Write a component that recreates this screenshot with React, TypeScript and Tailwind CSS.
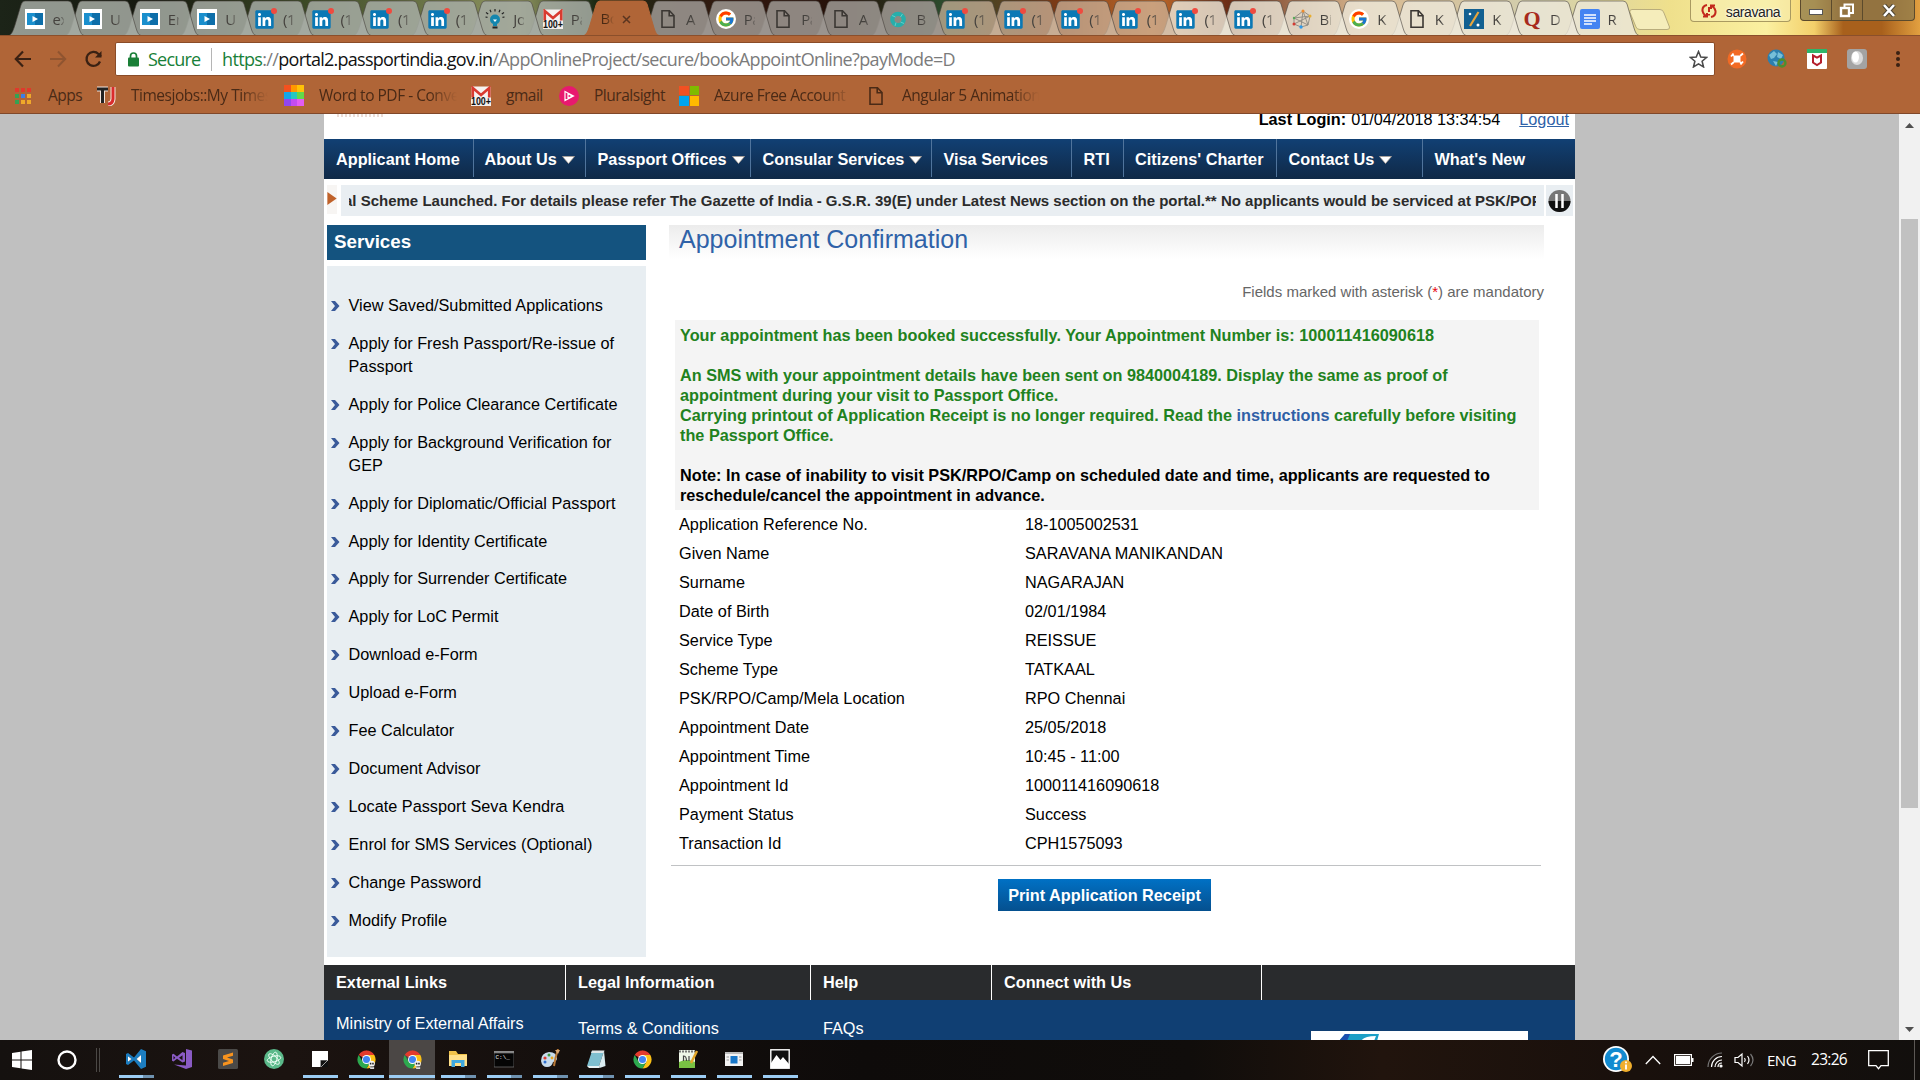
import React from "react";
import { FcGoogle } from "react-icons/fc";
import { FaLinkedin } from "react-icons/fa";

type Kind = "play" | "in" | "bulb" | "gmail" | "active" | "doc" | "google" | "ring" | "net" | "slash" | "quora" | "gdoc";

const tabs: { k: Kind; t: string }[] = [
  { k: "play", t: "ex" }, { k: "play", t: "U" }, { k: "play", t: "En" }, { k: "play", t: "U" },
  { k: "in", t: "(1" }, { k: "in", t: "(1" }, { k: "in", t: "(1" }, { k: "in", t: "(1" },
  { k: "bulb", t: "Jo" }, { k: "gmail", t: "Pa" }, { k: "active", t: "Bo" },
  { k: "doc", t: "A" }, { k: "google", t: "Pa" }, { k: "doc", t: "Pa" }, { k: "doc", t: "A" }, { k: "ring", t: "B" },
  { k: "in", t: "(1" }, { k: "in", t: "(1" }, { k: "in", t: "(1" }, { k: "in", t: "(1" }, { k: "in", t: "(1" }, { k: "in", t: "(1" },
  { k: "net", t: "Bi" }, { k: "google", t: "K" }, { k: "doc", t: "K" }, { k: "slash", t: "K" }, { k: "quora", t: "D" }, { k: "gdoc", t: "R" },
];

function Doc({ c = "#3b3733" }: { c?: string }) {
  return (
    <svg width="20" height="20" viewBox="0 0 20 20" fill="none" stroke={c} strokeWidth="1.6">
      <path d="M4 1.8h7.5L16 6.500v11.7H4z M11.2 2v4.8H16" />
    </svg>
  );
}

function Gmail() {
  return (
    <svg width="20" height="20" viewBox="0 0 20 20">
      <rect x="0.5" y="0.5" width="19" height="13" rx="1" fill="#f6f2f0" />
      <path d="M1.8 13.5V2l8.2 7 8.2-7v11.5" fill="none" stroke="#d93a30" strokeWidth="2.6" />
      <rect x="0" y="11.5" width="20" height="8.500" fill="#f4eeea" />
      <text x="0" y="19.2" fontSize="10" fontFamily="Liberation Sans" fontWeight="700" textLength="20" lengthAdjust="spacingAndGlyphs" fill="#111">100+</text>
    </svg>
  );
}

function Fav({ k }: { k: Kind }) {
  switch (k) {
    case "play":
      return (
        <svg width="20" height="20" viewBox="0 0 20 20">
          <rect width="20" height="20" fill="#fff" />
          <rect x="2" y="4" width="16" height="12" fill="#1a8fcd" />
          <path d="M10 4h8v12h-8z" fill="#0d6ea9" />
          <path d="M7.500 7v6l5.500-3z" fill="#fff" />
        </svg>
      );
    case "in":
      return (
        <span className="relative block h-5 w-5">
          <span className="absolute inset-[3px] bg-white" />
          <FaLinkedin className="absolute -left-px top-0 h-[21px] w-[21px] text-[#0a78b5]" />
          <span className="absolute -right-[2px] -top-px h-[6px] w-[6px] rounded-full bg-[#ef4a3f]" />
        </span>
      );
    case "bulb":
      return (
        <svg width="20" height="20" viewBox="0 0 20 20">
          <path d="M10 0v2.500M5 .8l1 2.400M15 .8l-1 2.400M1 3.500l2.200 1.500M19 3.500l-2.200 1.500M.5 8l2 .3M19.500 8l-2 .3" stroke="#222" strokeWidth="1.200" />
          <circle cx="10" cy="10.500" r="5" fill="#1386ae" />
          <path d="M8 14h4v3H8z" fill="#1386ae" />
          <path d="M8 10.500l2 2.500 2-2.500z" fill="#fff" />
          <rect x="7.500" y="17.500" width="5" height="2" fill="#222" />
        </svg>
      );
    case "gmail":
      return <Gmail />;
    case "google":
      return (
        <span className="grid h-5 w-5 place-items-center rounded-full bg-white"><FcGoogle className="h-[18px] w-[18px]" /></span>
      );
    case "ring":
      return (
        <svg width="20" height="20" viewBox="0 0 20 20">
          <circle cx="10" cy="10.500" r="5.700" fill="none" stroke="#27aeab" strokeWidth="4.200" />
          <path d="M4 6.500l3.500 1.500M14.500 5l-2 3M16 14.500l-3.500-1.500M7 17l1-3.500" stroke="#62cfca" strokeWidth="1" />
        </svg>
      );
    case "net":
      return (
        <svg width="20" height="20" viewBox="0 0 20 20" fill="none">
          <path d="M2 9l9-7 7 5-2 9-7 2-7-3zM2 9l14 7M11 2L9 18M18 7L2 15M2 9l16-2M11 2l5 14" stroke="#8b8880" strokeWidth="0.900" />
          <circle cx="11" cy="2" r="1.500" fill="#f08c2c" /><circle cx="2" cy="15" r="1.500" fill="#d53a32" />
          <circle cx="9" cy="18" r="1.700" fill="#2f9bea" /><circle cx="18" cy="7" r="1.500" fill="#e8af30" />
          <circle cx="2" cy="9" r="1.200" fill="#57a957" />
        </svg>
      );
    case "slash":
      return (
        <svg width="20" height="20" viewBox="0 0 20 20">
          <rect width="20" height="20" fill="#126091" />
          <path d="M14.500 3L6 17" stroke="#e7a63c" strokeWidth="2.200" />
          <circle cx="6" cy="5" r="1.300" fill="#fff" /><circle cx="14" cy="16" r="1.500" fill="#fff" />
        </svg>
      );
    case "quora":
      return <span className="block w-5 text-center font-['Liberation_Serif',serif] text-[22px] leading-5 font-bold text-[#a72a1c]">Q</span>;
    case "gdoc":
      return (
        <svg width="20" height="20" viewBox="0 0 20 20">
          <rect width="20" height="20" rx="2" fill="#4384f2" />
          <path d="M4 6h12M4 9h12M4 12h12M4 15h8" stroke="#fff" strokeWidth="1.500" />
        </svg>
      );
    default:
      return <Doc />;
  }
}

const tabFill = (i: number) =>
  i < 10 ? "rgba(165,171,163,0.86)" : i < 16 ? "rgba(156,150,145,0.88)" : i < 20 ? "rgba(205,182,158,0.72)" : "rgba(235,230,216,0.82)";

function Tab({ k, t, i }: { k: Kind; t: string; i: number }) {
  const active = k === "active";
  return (
    <div className="relative -mr-[17px] h-[35px] w-[74.600px] shrink-0" style={{ zIndex: active ? 60 : 40 - i }}>
      <svg className="absolute inset-0" width="76" height="36" viewBox="0 0 76 36">
        <path
          d="M0 35.500C3 34 4 31 6 25L12 5Q13 1 16 1H59Q62 1 63 4L70 28Q72 35 75 35.500Z"
          fill={active ? "#b06537" : tabFill(i)}
          stroke={active ? "#b06537" : "rgba(70,65,60,0.600)"}
          strokeWidth="1"
        />
      </svg>
      {active ? (
        <div className="relative flex h-full items-center pl-[16px] pt-[2px] text-[15px] text-[#4a2a14]">
          <span className="w-[14px] overflow-hidden tracking-tight [mask-image:linear-gradient(90deg,#000_40%,transparent)]">Bo</span>
          <svg className="ml-[8px] mt-[2px]" width="9" height="9" viewBox="0 0 9 9"><path d="M1 1l7 7M8 1L1 8" stroke="#5a3520" strokeWidth="1.500" /></svg>
        </div>
      ) : (
        <div className="relative flex h-full items-center pl-[16px] pt-[3px]">
          <Fav k={k} />
          <span className="ml-[8px] w-[11px] overflow-hidden text-[15px] leading-[20px] tracking-tight whitespace-nowrap text-[#45423e] [mask-image:linear-gradient(90deg,#000_50%,rgba(0,0,0,0.300))]">{t}</span>
        </div>
      )}
    </div>
  );
}

function TabStrip() {
  return (
    <div className="relative flex h-[35px] shrink-0 overflow-hidden bg-[linear-gradient(90deg,#1c2418_0%,#16190f_8%,#3c4a26_16%,#8f9560_27%,#1d2a14_31%,#33180f_38%,#241008_44%,#2c4a2c_49%,#7b3a16_55%,#c06a2a_60%,#6b2d16_64%,#d8b890_71%,#d2cfae_80%,#efe08c_87%,#fbf0a0_92%,#f3cf6a_94.500%,#a8601c_96%,#a8601c_98%,#e2a040_100%)] pl-[8.500px]">
      {tabs.map((x, i) => <Tab key={i} k={x.k} t={x.t} i={i} />)}
      <svg className="ml-[8px] mt-[9px] shrink-0" width="42" height="21" viewBox="0 0 42 21">
        <path d="M3 .5H31Q34 .5 35 4L40.500 18Q41 20.500 38 20.500H11Q8 20.500 7 18L.8 3Q.5 .5 3 .5Z" fill="#f5edbb" stroke="#b9ad7c" />
      </svg>
      <div className="ml-auto mr-[9px] flex h-[22px] w-[101px] items-center justify-center gap-[9px] rounded-b border border-t-0 border-[#a99a61] bg-[#f6eeb4]/60">
        <svg width="16" height="14" viewBox="0 0 16 14" fill="none" stroke="#c2281c" strokeWidth="2">
          <path d="M6 1Q1 2 1.500 7Q2 10 5 12M2 12.500h4V9M10 13Q15 12 14.500 7Q14 4 11 2M14 1.500h-4V5M8 3v5M8 10v1.500" />
        </svg>
        <span className="pt-[3px] font-['Liberation_Sans',sans-serif] text-[14px] leading-5 tracking-[-0.400px] text-[#222] [text-shadow:0_0_2px_#fff,0_0_3px_#fff]">saravana</span>
      </div>
      <div className="mr-[5px] flex h-[21px] w-[115px] rounded-b border border-t-0 border-[#5b4a2c] bg-[#8c7a4c]/75">
        <div className="grid w-[31px] place-items-center border-r border-[#5b4a2c]"><span className="mt-1 h-[6px] w-[14px] border border-[#555] bg-white" /></div>
        <div className="grid w-[31px] place-items-center border-r border-[#5b4a2c]">
          <svg width="16" height="15" viewBox="0 0 16 15" fill="none"><path d="M5.500 4V1.500H14V10h-3" stroke="#fff" strokeWidth="2" /><rect x="2" y="5" width="8" height="8" stroke="#fff" strokeWidth="2.400" /></svg>
        </div>
        <div className="grid flex-1 place-items-center">
          <svg width="14" height="13" viewBox="0 0 14 13"><path d="M2 1l10 11M12 1L2 12" stroke="#4d4433" strokeWidth="4.500" /><path d="M2 1l10 11M12 1L2 12" stroke="#fff" strokeWidth="2.600" /></svg>
        </div>
      </div>
    </div>
  );
}

function Toolbar() {
  return (
    <div className="flex h-[46px] shrink-0 items-center border-t border-[#8b4f2b] bg-[#b06537]">
      <svg className="ml-[14px]" width="18" height="18" viewBox="0 0 18 18" fill="none" stroke="#3a2113" strokeWidth="2.200"><path d="M17 9H2M9 1.500L1.800 9 9 16.500" /></svg>
      <svg className="ml-[17px]" width="18" height="18" viewBox="0 0 18 18" fill="none" stroke="#8f5430" strokeWidth="2"><path d="M1 9h15M9 1.500L16.200 9 9 16.500" /></svg>
      <svg className="ml-[17px]" width="19" height="18" viewBox="0 0 19 18" fill="none" stroke="#3a2113" strokeWidth="2.300"><path d="M16 11.500A7 7 0 1 1 14.500 4L17 6.500" /><path d="M17.500 1v6.500H11z" fill="#3a2113" stroke="none" /></svg>
      <div className="ml-[12px] mt-px flex h-[34px] w-[1600px] items-center rounded-[2px] border border-[#8a4c28] bg-white text-[18px] whitespace-nowrap">
        <svg className="ml-[12px]" width="11" height="15" viewBox="0 0 11 15"><rect y="5.500" width="11" height="9" rx="1" fill="#1a7f37" /><path d="M2.500 6V4a3 3 0 0 1 6 0v2" fill="none" stroke="#1a7f37" strokeWidth="1.700" /></svg>
        <span className="ml-[9px] w-[63px] tracking-[-0.800px] text-[#188038]">Secure</span>
        <span className="mr-[10px] h-[23px] w-px bg-[#b5b5b5]" />
        <span className="text-[#7b7b7b] tracking-[-0.640px]"><span className="text-[#188038]">https</span>://<span className="tracking-[-0.740px] text-[#111]">portal2.passportindia.gov.in</span>/AppOnlineProject/secure/bookAppointOnline?payMode=D</span>
        <svg className="ml-auto mr-[6px]" width="19" height="18" viewBox="0 0 24 23" fill="none" stroke="#4a4a4a" strokeWidth="2"><path d="M12 2l2.900 7 7.300.6-5.600 4.800 1.800 7.200L12 17.700l-6.400 3.900 1.800-7.200L1.800 9.600 9.100 9z" /></svg>
      </div>
      <div className="ml-[12px] flex items-center gap-[20px]">
        <svg width="20" height="20" viewBox="0 0 20 20"><circle cx="10" cy="10" r="9.500" fill="#f26a24" /><rect x="6.500" y="6.500" width="7" height="7" rx="1.500" fill="#fff" /><path d="M4 7.500L6.500 4.500M7 7L5 5M13 7l3-2.500M4 15.500l3-2.500M13 13l2 2M13.500 15.500l2.500-3" stroke="#fff" strokeWidth="1.800" fill="none" /></svg>
        <svg width="20" height="20" viewBox="0 0 20 20"><circle cx="9" cy="9" r="8.500" fill="#2c7fae" /><path d="M2 6l5-4 3 3-3 4-3 1zM11 3l5 3-2 4-4-2zM6 12l5 1-2 4z" fill="#76bfd8" /><circle cx="15" cy="14" r="3.500" fill="none" stroke="#4b8f2f" strokeWidth="2.300" /></svg>
        <svg width="20" height="20" viewBox="0 0 20 20"><rect width="20" height="20" rx="1" fill="#fff" /><rect width="20" height="4" fill="#2db56a" /><path d="M6 6.500l4 2.200 4-2.200v7l-4 2.500-4-2.500z" fill="none" stroke="#b41f2c" strokeWidth="2" /></svg>
        <svg width="20" height="20" viewBox="0 0 20 20"><rect width="20" height="20" rx="3" fill="#a3a3a3" /><ellipse cx="10" cy="9" rx="6" ry="7" fill="#d9d9d9" /><ellipse cx="8.500" cy="8" rx="3.500" ry="5.500" fill="#fff" /></svg>
        <svg width="20" height="20" viewBox="0 0 20 20" fill="#3a2113"><circle cx="11" cy="4" r="2" /><circle cx="11" cy="10" r="2" /><circle cx="11" cy="16" r="2" /></svg>
      </div>
    </div>
  );
}

function AppsGrid({ colors, s, g }: { colors: string[]; s: string; g: string }) {
  return <div className={`grid w-fit grid-cols-3 ${g}`}>{colors.map((c, i) => <span key={i} className={s} style={{ background: c }} />)}</div>;
}

function Bookmarks() {
  const label = "overflow-hidden whitespace-nowrap text-[15.500px] tracking-[-0.480px] text-[#4a2a16]";
  const fade = "[mask-image:linear-gradient(90deg,#000_80%,transparent)]";
  return (
    <div className="flex h-[33px] shrink-0 items-center border-b border-[#80482a] bg-[#b06537] pb-[3px]">
      <div className="ml-[15px] w-[33px]"><AppsGrid s="h-[4px] w-[4px]" g="gap-[2px]" colors={["#e0392c", "#e0392c", "#e0392c", "#35a152", "#3e7ee6", "#f0a92a", "#35a152", "#f0a92a", "#f0a92a"]} /></div>
      <span className={`w-[48px] ${label}`}>Apps</span>
      <svg width="21" height="20" viewBox="0 0 21 20" fill="none"><path d="M1 3h11M6.500 3v14" stroke="#f4e4dc" strokeWidth="5" /><path d="M17 1v12q-.5 5-5 5" stroke="#f4e4dc" strokeWidth="5" /><path d="M1 3h11M6.500 3v14" stroke="#222" strokeWidth="3" /><path d="M17 1v12q-.5 5-5 5" stroke="#da2c2c" strokeWidth="3" /></svg>
      <span className={`ml-[14px] w-[137px] ${label} ${fade}`}>Timesjobs::My Timesjobs</span>
      <div className="ml-[16px] w-[20px]"><AppsGrid s="h-[6.700px] w-[6.700px]" g="" colors={["#f4511e", "#ff9800", "#ffc107", "#14a6e8", "#27c7c0", "#62d94a", "#9146f0", "#c44cf0", "#e35cf3"]} /></div>
      <span className={`ml-[15px] w-[138px] ${label} ${fade}`}>Word to PDF - Convert</span>
      <span className="ml-[14px]"><Gmail /></span>
      <span className={`ml-[15px] w-[53px] ${label}`}>gmail</span>
      <svg width="20" height="20" viewBox="0 0 20 20"><circle cx="10" cy="10" r="10" fill="#e8196f" /><path d="M6 5.500l8.500 4.500L6 14.500zM9 7.500v5l4-2.500z" fill="none" stroke="#fff" strokeWidth="1.200" /></svg>
      <span className={`ml-[15px] w-[85px] ${label}`}>Pluralsight</span>
      <div className="grid w-[20px] grid-cols-2 gap-[1px]"><span className="h-[9.500px] bg-[#f25022]" /><span className="h-[9.500px] bg-[#7fba00]" /><span className="h-[9.500px] bg-[#00a4ef]" /><span className="h-[9.500px] bg-[#ffb900]" /></div>
      <span className={`ml-[15px] w-[137px] ${label} ${fade}`}>Azure Free Account | M</span>
      <span className="ml-[15px]"><Doc c="#4a2a16" /></span>
      <span className={`ml-[16px] w-[137px] ${label} ${fade}`}>Angular 5 Animations</span>
    </div>
  );
}

const nav = [
  { t: "Applicant Home", w: "w-[149.500px]", p: "pl-[12px]" },
  { t: "About Us", w: "w-[112px]", p: "pl-[11px]", a: true },
  { t: "Passport Offices", w: "w-[165px]", p: "pl-[12px]", a: true },
  { t: "Consular Services", w: "w-[181px]", p: "pl-[12px]", a: true },
  { t: "Visa Services", w: "w-[140px]", p: "pl-[12px]" },
  { t: "RTI", w: "w-[52px]", p: "pl-[12px]" },
  { t: "Citizens' Charter", w: "w-[153px]", p: "pl-[11.500px]" },
  { t: "Contact Us", w: "w-[146px]", p: "pl-[12px]", a: true },
  { t: "What's New", w: "flex-1", p: "pl-[12px]", last: true },
];

const services = [
  "View Saved/Submitted Applications", "Apply for Fresh Passport/Re-issue of Passport", "Apply for Police Clearance Certificate",
  "Apply for Background Verification for GEP", "Apply for Diplomatic/Official Passport", "Apply for Identity Certificate",
  "Apply for Surrender Certificate", "Apply for LoC Permit", "Download e-Form", "Upload e-Form", "Fee Calculator", "Document Advisor",
  "Locate Passport Seva Kendra", "Enrol for SMS Services (Optional)", "Change Password", "Modify Profile",
];

const details: [string, string][] = [
  ["Application Reference No.", "18-1005002531"], ["Given Name", "SARAVANA MANIKANDAN"], ["Surname", "NAGARAJAN"],
  ["Date of Birth", "02/01/1984"], ["Service Type", "REISSUE"], ["Scheme Type", "TATKAAL"],
  ["PSK/RPO/Camp/Mela Location", "RPO Chennai"], ["Appointment Date", "25/05/2018"], ["Appointment Time", "10:45 - 11:00"],
  ["Appointment Id", "100011416090618"], ["Payment Status", "Success"], ["Transaction Id", "CPH1575093"],
];

function Site() {
  return (
    <div className="flex w-[1251px] shrink-0 flex-col overflow-hidden bg-white font-['Liberation_Sans',Arial,sans-serif] text-[16.250px] text-black">
      <div className="flex h-[25px] shrink-0 justify-between overflow-hidden pl-[13px] pr-[6px] leading-[10px]">
        <span className="h-[3px] w-[46px] bg-[repeating-linear-gradient(90deg,#eadcd6_0_2px,#fff_2px_4px)]" />
        <div className="flex whitespace-nowrap"><b>Last Login:</b><span className="ml-[5px]">01/04/2018 13:34:54</span><span className="ml-[19px] text-[#2f62a8] underline">Logout</span></div>
      </div>
      <nav className="flex h-[40px] shrink-0 bg-gradient-to-b from-[#114074] to-[#0f2947] pb-[2px] font-bold text-white">
        {nav.map((n) => (
          <div key={n.t} className={`flex shrink-0 items-center pt-[2px] whitespace-nowrap ${n.w} ${n.p} ${n.last ? "" : "border-r border-[#50749c]"}`}>
            {n.t}
            {n.a && <svg className="ml-[5px] mt-[2px]" width="13" height="8" viewBox="0 0 13 8"><path d="M.5.500h12L6.500 7.500z" fill="#fff" stroke="#b5a595" strokeWidth=".7" /></svg>}
          </div>
        ))}
      </nav>
      <div className="mt-[6px] flex h-[31px] shrink-0">
        <div className="ml-[3px] h-[29px] w-[10px] bg-[#f7f5f3] pt-[7px]"><svg width="10" height="13" viewBox="0 0 10 14"><path d="M0 0l10 7-10 7z" fill="#c0622a" /></svg></div>
        <div className="ml-[4px] w-[1203px] bg-[#e9eef2] px-[8px]">
          <div className="flex w-[1187px] overflow-hidden text-[15px] leading-[31px] font-bold whitespace-nowrap text-[#2b2b2b]">
            <span className="-ml-[5px]">al Scheme Launched. For details please refer The Gazette of India - G.S.R. 39(E) under Latest News section on the portal.** No applicants would be serviced at PSK/POPSK</span>
          </div>
        </div>
        <div className="ml-[2px] grid w-[27px] place-items-center bg-[#e9eef2]">
          <svg width="23" height="24" viewBox="0 0 23 24"><circle cx="11.500" cy="12" r="11" fill="#777" /><path d="M.5 12a11 11 0 0 0 22 0z" fill="#111" /><path d="M8.500 5v14M14.500 5v14" stroke="#fff" strokeWidth="2.500" /></svg>
        </div>
      </div>
      <div className="mt-[9px] flex h-[740px] shrink-0">
        <aside className="ml-[3px] w-[319px] shrink-0">
          <h2 className="h-[35px] bg-[#14537f] pl-[7px] text-[18.750px] leading-[34px] font-bold text-white">Services</h2>
          <ul className="mt-[6px] flex h-[691px] flex-col gap-[14.920px] bg-[#e8eef2] pt-[28px]">
            {services.map((s) => (
              <li key={s} className="flex pl-[4px] leading-[23px]">
                <svg className="mt-[7px] mr-[8.500px] shrink-0" width="9" height="10" viewBox="0 0 9 10"><path d="M0 0h4l4.500 5L4 10H0l4-5z" fill="#3a5a9a" /></svg>
                <span className="w-[280px]">{s}</span>
              </li>
            ))}
          </ul>
        </aside>
        <main className="ml-[23px] w-[875px]">
          <h1 className="h-[34px] bg-gradient-to-b from-[#ececec] to-white pl-[10px] text-[25px] leading-[28px] text-[#2f62a8]">Appointment Confirmation</h1>
          <p className="mt-[23px] text-right text-[15px] leading-[20px] text-[#666]">Fields marked with asterisk (<span className="text-red-600">*</span>) are mandatory</p>
          <div className="mt-[18px] ml-[6px] h-[190px] w-[864px] bg-[#f4f4f4] pt-[5px] pl-[5px] leading-[20px] font-bold whitespace-nowrap text-[#1f8220]">
            <p className="tracking-[0.010px]">Your appointment has been booked successfully. Your Appointment Number is: 100011416090618</p>
            <p className="mt-[20px]">An SMS with your appointment details have been sent on 9840004189. Display the same as proof of<br />appointment during your visit to Passport Office.</p>
            <p>Carrying printout of Application Receipt is no longer required. Read the <span className="text-[#2f5fa6]">instructions</span> carefully before visiting<br />the Passport Office.</p>
            <p className="mt-[20px] text-black">Note: In case of inability to visit PSK/RPO/Camp on scheduled date and time, applicants are requested to<br />reschedule/cancel the appointment in advance.</p>
          </div>
          <dl className="ml-[2px] w-[870px] border-b border-[#c0c2c4] pb-[7px] pl-[8px]">
            {details.map(([a, b]) => (
              <div key={a} className="flex h-[29px] items-center"><dt className="w-[346px]">{a}</dt><dd>{b}</dd></div>
            ))}
          </dl>
          <div className="mt-[13px] ml-[329px] h-[32px] w-[213px] bg-gradient-to-b from-[#0071c5] to-[#05508f] text-center leading-[32px] font-bold whitespace-nowrap text-white">Print Application Receipt</div>
        </main>
      </div>
      <div className="flex h-[35px] shrink-0 bg-[#292b2d] leading-[35px] font-bold text-white">
        <div className="w-[242px] border-r border-white pl-[12px]">External Links</div>
        <div className="w-[245px] border-r border-white pl-[12px]">Legal Information</div>
        <div className="w-[181px] border-r border-white pl-[12px]">Help</div>
        <div className="w-[270px] border-r border-white pl-[12px]">Connect with Us</div>
      </div>
      <div className="flex h-[40px] shrink-0 overflow-hidden bg-[#103f73] text-white">
        <div className="w-[242px] pt-[13px] pl-[12px] leading-[20px]">Ministry of External Affairs</div>
        <div className="w-[245px] pt-[18px] pl-[12px] leading-[20px]">Terms &amp; Conditions</div>
        <div className="w-[181px] pt-[18px] pl-[12px] leading-[20px]">FAQs</div>
        <div className="mt-[31px] ml-[319px] w-[217px] bg-white pl-[28px]"><svg width="44" height="10" viewBox="0 0 44 10"><path d="M0 10L6 3h34l-2 7z" fill="#1b9fc6" /><path d="M0 10L6 3h5l-3 7z" fill="#1c4fae" /><path d="M22 10q3-5 15-5l-2 5z" fill="#fff" /></svg></div>
      </div>
    </div>
  );
}

function Scrollbar() {
  return (
    <div className="flex w-[21px] shrink-0 flex-col items-center bg-[#f1f1f1]">
      <svg className="mt-[9px]" width="9" height="5" viewBox="0 0 9 5"><path d="M0 5l4.500-5L9 5z" fill="#505050" /></svg>
      <div className="mt-[91px] h-[589px] w-[17px] bg-[#c1c1c1]" />
      <svg className="mt-auto mb-[8px]" width="9" height="5" viewBox="0 0 9 5"><path d="M0 0l4.500 5L9 0z" fill="#505050" /></svg>
    </div>
  );
}

function Chrome({ face }: { face?: boolean }) {
  return (
    <svg width="19" height="19" viewBox="0 0 20 20">
      <path d="M10 10L1.770 5.250A9.500 9.500 0 0 1 18.230 5.250z" fill="#e33b2e" />
      <path d="M10 10V.5L18.230 5.250z" fill="#e33b2e" />
      <path d="M10 5.250H18.230A9.500 9.500 0 0 1 10 19.500L14.100 12.400z" fill="#fbc116" />
      <path d="M1.770 5.250A9.500 9.500 0 0 0 10 19.500L14.100 12.400 10 10 5.900 12.400z" fill="#2da94f" />
      <circle cx="10" cy="10" r="4.700" fill="#fff" /><circle cx="10" cy="10" r="3.700" fill="#4285f4" />
      {face && <><circle cx="15.500" cy="14.500" r="3.300" fill="#f2f2f2" /><path d="M13 17.500h5v2.500h-4z" fill="#ddd" /><path d="M13.500 13.500h1.600v1.800h-1.600zM16 13.500h1.600v1.800H16zM14 17.300h3.500v.9H14z" fill="#222" /></>}
    </svg>
  );
}

const tasks: { n: string; u: 0 | 1 | 2; on?: boolean }[] = [
  { n: "code", u: 2 }, { n: "vs", u: 0 }, { n: "sublime", u: 0 }, { n: "atom", u: 0 }, { n: "note", u: 1 }, { n: "chromef", u: 1 },
  { n: "chromef", u: 1, on: true }, { n: "folder", u: 2 }, { n: "cmd", u: 2 }, { n: "paint", u: 2 }, { n: "notepad", u: 2 },
  { n: "chrome", u: 1 }, { n: "npp", u: 1 }, { n: "win", u: 1 }, { n: "photo", u: 1 },
];

function TaskIcon({ n }: { n: string }) {
  const p = { width: 20, height: 20, viewBox: "0 0 20 20" };
  switch (n) {
    case "code":
      return <svg {...p}><path d="M0 5L2 4l6 4.500L15 0l5 2.300v15.400L15 20 8 11.500 2 16l-2-1zM2 7.200v5.600L5.500 10zM15 6l-4.500 4 4.500 4z" fill="#1c7dc0" fillRule="evenodd" /><path d="M2 7.200v5.600L5.500 10zM15 6l-4.500 4 4.500 4z" fill="#fff" /></svg>;
    case "vs":
      return <svg {...p}><path d="M14 0l6 1.500V18l-6 2L2 15.500l12 1zM0 5.500l1.500-.8L5 7.500 10.500 3l2.500 1v8.500l-2.500 1L5 9.800 1.500 12.500 0 11.800zM1.500 7v3.500L3.300 8.700zM10.500 6.200L7 8.700l3.500 2.500z" fill="#8a5bc4" fillRule="evenodd" /></svg>;
    case "sublime":
      return <svg {...p}><rect width="20" height="20" rx="1.500" fill="#4b4a48" /><path d="M15 3.500L5 6.500V10l6 2-6 1.800V17l10-3v-3.500L9 8.500l6-1.800z" fill="#f7931e" /></svg>;
    case "atom":
      return <svg {...p}><circle cx="10" cy="10" r="10" fill="#5bb98a" /><g fill="none" stroke="#effff6" strokeWidth=".9"><ellipse cx="10" cy="10" rx="2.800" ry="7" transform="rotate(15 10 10)" /><ellipse cx="10" cy="10" rx="2.800" ry="7" transform="rotate(75 10 10)" /><ellipse cx="10" cy="10" rx="2.800" ry="7" transform="rotate(135 10 10)" /></g></svg>;
    case "note":
      return <svg {...p}><path d="M2 2h16v16H2z" fill="#fff" /><path d="M18 11v7h-8v-.5h0V11z" fill="#111" /><path d="M10.500 11H18l-6.500 6.500h-1z" fill="#111" stroke="#fff" strokeWidth=".6" /></svg>;
    case "chromef":
      return <Chrome face />;
    case "chrome":
      return <Chrome />;
    case "folder":
      return <svg {...p}><path d="M1 2h7l2 3h9v12H1z" fill="#f0c24a" /><path d="M1 6h18v11H1z" fill="#ffe08a" /><path d="M3.500 18v-7h13v7h-3.500v-4H7v4z" fill="#3fa9e0" /></svg>;
    case "cmd":
      return <svg {...p}><rect y="2" width="20" height="16" fill="#8c8c8c" /><rect y="4" width="20" height="14" fill="#050505" stroke="#777" strokeWidth=".7" /><text x="1.500" y="10" fontSize="6" fontFamily="Liberation Mono" fill="#eee">C:\_</text></svg>;
    case "paint":
      return <svg {...p}><path d="M1 12Q1 4 9 3q8 0 8 7-1 3-4 3-1 5-6 5-5 0-6-6z" fill="#c8dcec" /><circle cx="5" cy="9" r="1.600" fill="#d93b2f" /><circle cx="9" cy="6" r="1.500" fill="#3f9d45" /><circle cx="5" cy="13" r="1.500" fill="#2f6fd0" /><circle cx="12" cy="9" r="1.400" fill="#e8a822" /><path d="M18 0l-2.500 9L14 17" stroke="#b97a3a" strokeWidth="2" fill="none" /><path d="M15 1h5l-2 4z" fill="#d9a873" /></svg>;
    case "notepad":
      return <svg {...p}><path d="M6 2h12l-5 15H1z" fill="#7fbfd0" /><path d="M6 1.500h12.500l-1 2.500H5z" fill="#dfe6e8" /><path d="M18 2l1.500 15-6 2L13 17z" fill="#dceef2" /><path d="M1 17h12l.5 2H3z" fill="#e9f2f4" /></svg>;
    case "npp":
      return <svg {...p}><rect x="1" y="1" width="16" height="18" fill="#eef6e8" /><path d="M1 13q8-4 16 0v6H1z" fill="#79c143" /><path d="M1 2.500h16" stroke="#777" strokeDasharray="2 1" strokeWidth="2" /><path d="M5.500 12V6.500M5.500 7q3 0 3 5M11 7v5" stroke="#444" strokeWidth="1.200" fill="none" /><path d="M19 2l-6 12" stroke="#e2a62a" strokeWidth="2.500" /></svg>;
    case "win":
      return <svg {...p}><rect x="1" y="3" width="18" height="14" fill="#f3f3f3" /><path d="M1 4h18" stroke="#aaa" strokeWidth="1.500" /><rect x="6.500" y="7" width="7" height="7.500" fill="#1877c9" /><path d="M2.500 8h2.500M2.500 11h2.500M15 8h2.500M15 11h2.500" stroke="#999" /></svg>;
    default:
      return <svg {...p}><rect x=".8" y=".8" width="18.400" height="18.400" fill="#111" stroke="#fff" strokeWidth="1.400" /><path d="M1 14l5.500-8 4 5L13 8l6 7v4H1z" fill="#fff" /></svg>;
  }
}

function Taskbar() {
  return (
    <div className="flex h-[40px] shrink-0 items-center bg-[linear-gradient(90deg,#15110f,#1b1310_15%,#0e0b0a_45%,#100d0b_62%,#21140d_72%,#19100c_85%,#120f0d)] text-white">
      <svg className="ml-[12px]" width="20" height="20" viewBox="0 0 20 20" fill="#fff"><path d="M0 3l8.500-1.200V9.500H0zM9.500 1.600L20 0v9.500H9.500zM0 10.500h8.500v7.700L0 17zM9.500 10.500H20V20l-10.500-1.600z" /></svg>
      <svg className="ml-[25px]" width="20" height="20" viewBox="0 0 20 20"><circle cx="10" cy="10" r="8.500" fill="none" stroke="#fff" strokeWidth="2.400" /></svg>
      <div className="ml-[19px] h-[24px] w-[4px] border-x border-[#4b4845]" />
      <div className="ml-[13px] flex h-full">
        {tasks.map((t, i) => (
          <div key={i} className={`flex h-full w-[46px] flex-col items-center ${t.on ? "bg-[#4b4745]" : ""}`}>
            <div className="mt-[9px] grid h-[20px] place-items-center"><TaskIcon n={t.n} /></div>
            {t.u > 0 && (
              <div className={`mt-[6px] flex h-[3px] bg-[#9ccdf4] ${t.on ? "w-[46px]" : "w-[35px]"}`}>
                {t.u === 2 && <span className="ml-auto w-[11px] bg-[#6f92b0]" />}
              </div>
            )}
          </div>
        ))}
      </div>
      <svg className="ml-auto" width="29" height="28" viewBox="0 0 29 28"><circle cx="13" cy="13" r="13" fill="#fff" /><circle cx="13" cy="13" r="11.200" fill="#128ad0" /><text x="13" y="21" textAnchor="middle" fontSize="22" fontWeight="700" fontFamily="Liberation Sans" fill="#fff">?</text><circle cx="23" cy="20" r="6" fill="#f0ae2c" /><path d="M23 18.500v5M23 15.500v1.700" stroke="#fff" strokeWidth="1.800" /></svg>
      <svg className="ml-[13px]" width="16" height="10" viewBox="0 0 16 10"><path d="M.8 9L8 1.500 15.200 9" fill="none" stroke="#fff" strokeWidth="1.300" /></svg>
      <svg className="ml-[13px]" width="20" height="12" viewBox="0 0 20 12"><rect x=".6" y=".6" width="16.800" height="10.800" fill="none" stroke="#fff" strokeWidth="1.200" /><rect x="2" y="2" width="14" height="8" fill="#fff" /><rect x="18" y="4" width="1.500" height="4" fill="#fff" /></svg>
      <svg className="ml-[13px]" width="16" height="16" viewBox="0 0 16 16" fill="none" stroke="#fff" strokeWidth="1.200"><path d="M1 15A14 14 0 0 1 15 1" stroke="#777" /><path d="M4.500 15A10.500 10.500 0 0 1 15 4.500M8 15a7 7 0 0 1 7-7M11 15q0-4 4-4" /><circle cx="14" cy="14" r="1" fill="#fff" /></svg>
      <svg className="ml-[11px]" width="21" height="16" viewBox="0 0 21 16" fill="none" stroke="#fff" strokeWidth="1.200"><path d="M1 5.500h3L8 2v12l-4-3.500H1z" /><path d="M10.500 6q1.500 2 0 4M13.500 4q3 4 0 8" /><path d="M16.500 2q5 6 0 12" stroke="#777" /></svg>
      <span className="ml-[12px] w-[44px] text-[15px] tracking-[-0.500px]">ENG</span>
      <span className="w-[57px] text-[15.500px] tracking-[-0.700px]">23:26</span>
      <svg width="21" height="20" viewBox="0 0 21 20"><path d="M.7.700h19.600v15H13l-2.500 3-2.500-3H.7z" fill="none" stroke="#fff" strokeWidth="1.300" /></svg>
      <div className="mr-[5px] ml-[25px] h-full w-px bg-[#5c5855]" />
    </div>
  );
}

export default function App() {
  return (
    <div className="flex h-[1080px] w-[1920px] flex-col overflow-hidden font-['Open_Sans','Noto_Sans',sans-serif]">
      <TabStrip />
      <Toolbar />
      <Bookmarks />
      <div className="flex h-[926px] shrink-0 bg-[#c0c0c0]">
        <div className="w-[324px] shrink-0" />
        <Site />
        <div className="flex-1" />
        <Scrollbar />
      </div>
      <Taskbar />
    </div>
  );
}
